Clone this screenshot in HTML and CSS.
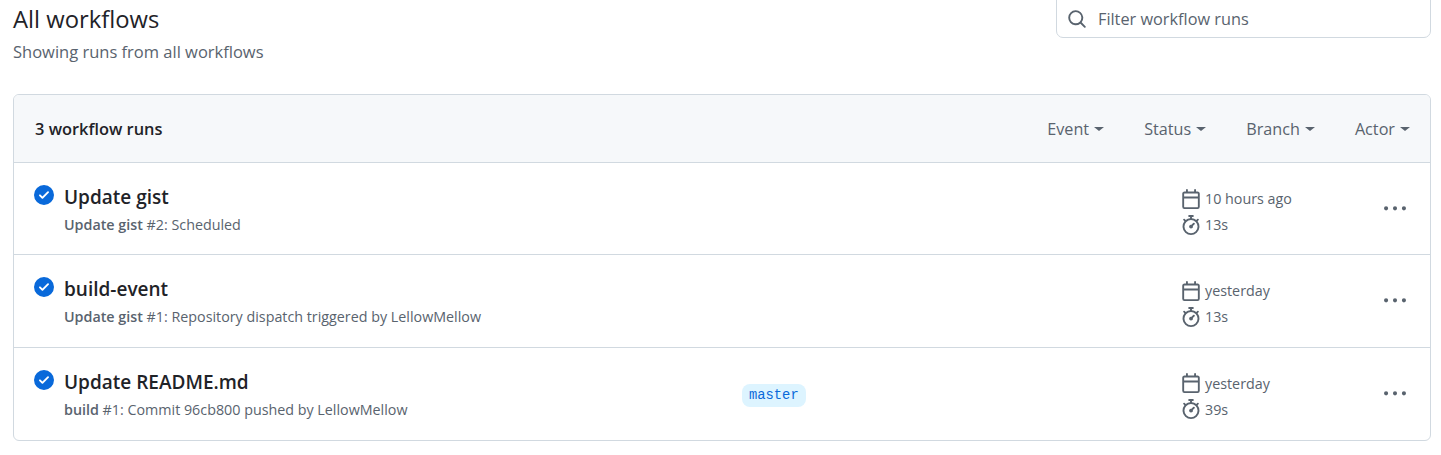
FILE: index.html
```html
<!DOCTYPE html>
<html lang="en">
<head>
    <meta charset="UTF-8">
    <meta name="viewport" content="width=device-width, initial-scale=1.0">
    <title>All workflows</title>
    <link rel="stylesheet" href="styles.css">
</head>
<body>
    <div class="page">
        <div class="top">
            <div>
                <h2 class="page-title">All workflows</h2>
                <p class="page-sub">Showing runs from all workflows</p>
            </div>
            <div class="filter">
                <svg class="search-icon" viewBox="0 0 16 16"><path d="M10.68 11.74a6 6 0 0 1-7.922-8.982 6 6 0 0 1 8.982 7.922l3.04 3.04a.749.749 0 0 1-.326 1.275.749.749 0 0 1-.734-.215ZM11.5 7a4.499 4.499 0 1 0-8.997 0A4.499 4.499 0 0 0 11.5 7Z"/></svg>
                <span class="filter-text">Filter workflow runs</span>
            </div>
        </div>

        <div class="box">
            <div class="box-head">
                <strong class="count">3 workflow runs</strong>
                <div class="menus">
                    <span class="menu">Event<i class="caret"></i></span>
                    <span class="menu">Status<i class="caret"></i></span>
                    <span class="menu">Branch<i class="caret"></i></span>
                    <span class="menu">Actor<i class="caret"></i></span>
                </div>
            </div>

            <div class="run">
                <svg class="check" viewBox="0 0 16 16"><path d="M8 16A8 8 0 1 1 8 0a8 8 0 0 1 0 16Zm3.78-9.72a.751.751 0 0 0-.018-1.042.751.751 0 0 0-1.042-.018L6.75 9.19 5.28 7.72a.751.751 0 0 0-1.042.018.751.751 0 0 0-.018 1.042l2 2a.75.75 0 0 0 1.06 0Z"/></svg>
                <div class="run-main">
                    <div class="run-title">Update gist</div>
                    <div class="run-sub"><b>Update gist</b> #2: Scheduled</div>
                </div>
                <div class="run-branch"></div>
                <div class="run-meta">
                    <div class="meta-line">
                        <svg class="meta-icon" viewBox="0 0 16 16"><path d="M4.75 0a.75.75 0 0 1 .75.75V2h5V.75a.75.75 0 0 1 1.5 0V2h1.25c.966 0 1.75.784 1.75 1.75v10.5A1.75 1.75 0 0 1 13.25 16H2.75A1.75 1.75 0 0 1 1 14.25V3.75C1 2.784 1.784 2 2.75 2H4V.75A.75.75 0 0 1 4.75 0ZM2.5 7.5v6.75c0 .138.112.25.25.25h10.5a.25.25 0 0 0 .25-.25V7.5Zm10.75-4H2.75a.25.25 0 0 0-.25.25V6h11V3.75a.25.25 0 0 0-.25-.25Z"/></svg>
                        10 hours ago
                    </div>
                    <div class="meta-line">
                        <svg class="meta-icon" viewBox="0 0 16 16"><path d="M5.75.75A.75.75 0 0 1 6.5 0h3a.75.75 0 0 1 0 1.5h-.75v1l-.001.041a6.724 6.724 0 0 1 3.464 1.435l.007-.006.75-.75a.751.751 0 0 1 1.042.018.751.751 0 0 1 .018 1.042l-.75.75-.006.007a6.75 6.75 0 1 1-10.548 0L2.72 5.03l-.75-.75a.751.751 0 0 1 .018-1.042.751.751 0 0 1 1.042-.018l.75.75.007.006A6.72 6.72 0 0 1 7.25 2.541V1.5H6.5a.75.75 0 0 1-.75-.75ZM8 14.5a5.25 5.25 0 1 0-.001-10.501A5.25 5.25 0 0 0 8 14.5Zm.389-6.7 1.33-1.33a.75.75 0 1 1 1.061 1.06L9.45 8.861A1.503 1.503 0 0 1 8 10.75a1.499 1.499 0 1 1 .389-2.95Z"/></svg>
                        13s
                    </div>
                </div>
                <svg class="kebab" viewBox="0 0 16 16"><path d="M8 9a1.5 1.5 0 1 0 0-3 1.5 1.5 0 0 0 0 3ZM1.5 9a1.5 1.5 0 1 0 0-3 1.5 1.5 0 0 0 0 3Zm13 0a1.5 1.5 0 1 0 0-3 1.5 1.5 0 0 0 0 3Z"/></svg>
            </div>

            <div class="run">
                <svg class="check" viewBox="0 0 16 16"><path d="M8 16A8 8 0 1 1 8 0a8 8 0 0 1 0 16Zm3.78-9.72a.751.751 0 0 0-.018-1.042.751.751 0 0 0-1.042-.018L6.75 9.19 5.28 7.72a.751.751 0 0 0-1.042.018.751.751 0 0 0-.018 1.042l2 2a.75.75 0 0 0 1.06 0Z"/></svg>
                <div class="run-main">
                    <div class="run-title">build-event</div>
                    <div class="run-sub"><b>Update gist</b> #1: Repository dispatch triggered by LellowMellow</div>
                </div>
                <div class="run-branch"></div>
                <div class="run-meta">
                    <div class="meta-line">
                        <svg class="meta-icon" viewBox="0 0 16 16"><path d="M4.75 0a.75.75 0 0 1 .75.75V2h5V.75a.75.75 0 0 1 1.5 0V2h1.25c.966 0 1.75.784 1.75 1.75v10.5A1.75 1.75 0 0 1 13.25 16H2.75A1.75 1.75 0 0 1 1 14.25V3.75C1 2.784 1.784 2 2.75 2H4V.75A.75.75 0 0 1 4.75 0ZM2.5 7.5v6.75c0 .138.112.25.25.25h10.5a.25.25 0 0 0 .25-.25V7.5Zm10.75-4H2.75a.25.25 0 0 0-.25.25V6h11V3.75a.25.25 0 0 0-.25-.25Z"/></svg>
                        yesterday
                    </div>
                    <div class="meta-line">
                        <svg class="meta-icon" viewBox="0 0 16 16"><path d="M5.75.75A.75.75 0 0 1 6.5 0h3a.75.75 0 0 1 0 1.5h-.75v1l-.001.041a6.724 6.724 0 0 1 3.464 1.435l.007-.006.75-.75a.751.751 0 0 1 1.042.018.751.751 0 0 1 .018 1.042l-.75.75-.006.007a6.75 6.75 0 1 1-10.548 0L2.72 5.03l-.75-.75a.751.751 0 0 1 .018-1.042.751.751 0 0 1 1.042-.018l.75.75.007.006A6.72 6.72 0 0 1 7.25 2.541V1.5H6.5a.75.75 0 0 1-.75-.75ZM8 14.5a5.25 5.25 0 1 0-.001-10.501A5.25 5.25 0 0 0 8 14.5Zm.389-6.7 1.33-1.33a.75.75 0 1 1 1.061 1.06L9.45 8.861A1.503 1.503 0 0 1 8 10.75a1.499 1.499 0 1 1 .389-2.95Z"/></svg>
                        13s
                    </div>
                </div>
                <svg class="kebab" viewBox="0 0 16 16"><path d="M8 9a1.5 1.5 0 1 0 0-3 1.5 1.5 0 0 0 0 3ZM1.5 9a1.5 1.5 0 1 0 0-3 1.5 1.5 0 0 0 0 3Zm13 0a1.5 1.5 0 1 0 0-3 1.5 1.5 0 0 0 0 3Z"/></svg>
            </div>

            <div class="run">
                <svg class="check" viewBox="0 0 16 16"><path d="M8 16A8 8 0 1 1 8 0a8 8 0 0 1 0 16Zm3.78-9.72a.751.751 0 0 0-.018-1.042.751.751 0 0 0-1.042-.018L6.75 9.19 5.28 7.72a.751.751 0 0 0-1.042.018.751.751 0 0 0-.018 1.042l2 2a.75.75 0 0 0 1.06 0Z"/></svg>
                <div class="run-main">
                    <div class="run-title">Update README.md</div>
                    <div class="run-sub"><b>build</b> #1: Commit 96cb800 pushed by LellowMellow</div>
                </div>
                <div class="run-branch"><span class="branch-tag">master</span></div>
                <div class="run-meta">
                    <div class="meta-line">
                        <svg class="meta-icon" viewBox="0 0 16 16"><path d="M4.75 0a.75.75 0 0 1 .75.75V2h5V.75a.75.75 0 0 1 1.5 0V2h1.25c.966 0 1.75.784 1.75 1.75v10.5A1.75 1.75 0 0 1 13.25 16H2.75A1.75 1.75 0 0 1 1 14.25V3.75C1 2.784 1.784 2 2.75 2H4V.75A.75.75 0 0 1 4.75 0ZM2.5 7.5v6.75c0 .138.112.25.25.25h10.5a.25.25 0 0 0 .25-.25V7.5Zm10.75-4H2.75a.25.25 0 0 0-.25.25V6h11V3.75a.25.25 0 0 0-.25-.25Z"/></svg>
                        yesterday
                    </div>
                    <div class="meta-line">
                        <svg class="meta-icon" viewBox="0 0 16 16"><path d="M5.75.75A.75.75 0 0 1 6.5 0h3a.75.75 0 0 1 0 1.5h-.75v1l-.001.041a6.724 6.724 0 0 1 3.464 1.435l.007-.006.75-.75a.751.751 0 0 1 1.042.018.751.751 0 0 1 .018 1.042l-.75.75-.006.007a6.75 6.75 0 1 1-10.548 0L2.72 5.03l-.75-.75a.751.751 0 0 1 .018-1.042.751.751 0 0 1 1.042-.018l.75.75.007.006A6.72 6.72 0 0 1 7.25 2.541V1.5H6.5a.75.75 0 0 1-.75-.75ZM8 14.5a5.25 5.25 0 1 0-.001-10.501A5.25 5.25 0 0 0 8 14.5Zm.389-6.7 1.33-1.33a.75.75 0 1 1 1.061 1.06L9.45 8.861A1.503 1.503 0 0 1 8 10.75a1.499 1.499 0 1 1 .389-2.95Z"/></svg>
                        39s
                    </div>
                </div>
                <svg class="kebab" viewBox="0 0 16 16"><path d="M8 9a1.5 1.5 0 1 0 0-3 1.5 1.5 0 0 0 0 3ZM1.5 9a1.5 1.5 0 1 0 0-3 1.5 1.5 0 0 0 0 3Zm13 0a1.5 1.5 0 1 0 0-3 1.5 1.5 0 0 0 0 3Z"/></svg>
            </div>
        </div>
    </div>
</body>
</html>
```

FILE: styles.css
```css
*{
    margin: 0;
    padding: 0;
    box-sizing: border-box;
}
html,body{
    height: 455px;
    overflow: hidden;
}
body{
    background-color: #fff;
    color: #1f2328;
    font-family: "Open Sans", "Noto Sans", sans-serif;
    font-size: 14px;
}
.page{
    margin: -10px 10px 0 13px;
}
.top{
    display: flex;
    justify-content: space-between;
    align-items: flex-start;
    height: 105px;
    margin-bottom: -1px;
}
.page-title{
    font-size: 23.8px;
    font-weight: 400;
    line-height: 30px;
    margin-top: 14px;
}
.page-sub{
    font-size: 16.5px;
    line-height: 22px;
    margin-top: 7px;
    color: #59636e;
}
.filter{
    width: 375px;
    height: 48px;
    border: 1px solid #d1d9e0;
    border-radius: 7px;
    display: flex;
    align-items: center;
    padding: 10px 0 0 10px;
    gap: 11px;
}
.search-icon{
    width: 20px;
    height: 20px;
    fill: #59636e;
}
.filter-text{
    font-size: 16.3px;
    color: #59636e;
}
.box{
    border: 1px solid #d1d9e0;
    border-radius: 6px;
    overflow: hidden;
}
.box-head{
    height: 67px;
    background-color: #f6f8fa;
    display: flex;
    justify-content: space-between;
    align-items: center;
    padding: 0 20px 0 21px;
}
.count{
    font-size: 16.4px;
    font-weight: 600;
}
.menus{
    display: flex;
    gap: 40px;
}
.menu{
    font-size: 16.2px;
    color: #59636e;
    display: flex;
    align-items: center;
}
.caret{
    display: inline-block;
    margin-left: 5px;
    border-top: 4px solid #59636e;
    border-left: 5px solid transparent;
    border-right: 5px solid transparent;
}
.run{
    border-top: 1px solid #d1d9e0;
    height: 92.4px;
    display: grid;
    grid-template-columns: 20px 668px 429px 193px 22px;
    column-gap: 10px;
    padding-left: 20px;
    align-items: start;
}
.run:last-child{
    height: 93.5px;
}
.check{
    width: 20px;
    height: 20px;
    fill: #0969da;
    margin-top: 22px;
}
.run-main{
    padding-top: 20px;
}
.run-title{
    font-size: 19px;
    font-weight: 600;
    line-height: 28px;
}
.run-sub{
    font-size: 14.3px;
    line-height: 20px;
    margin-top: 4px;
    color: #59636e;
}
.run-sub b{
    font-weight: 600;
}
.run-branch{
    padding-top: 3px;
    height: 100%;
    display: flex;
    align-items: center;
}
.branch-tag{
    font-family: "Liberation Mono", monospace;
    font-size: 13.8px;
    line-height: 23px;
    padding: 0 7px;
    border-radius: 8px;
    color: #0969da;
    background-color: #ddf4ff;
}
.run-meta{
    padding-top: 22.5px;
}
.meta-line{
    display: flex;
    align-items: center;
    gap: 4px;
    height: 26px;
    font-size: 14.3px;
    color: #59636e;
}
.meta-icon{
    width: 20px;
    height: 20px;
    fill: #59636e;
}
.kebab{
    width: 22px;
    height: 22px;
    fill: #59636e;
    margin-top: 35px;
}
```
